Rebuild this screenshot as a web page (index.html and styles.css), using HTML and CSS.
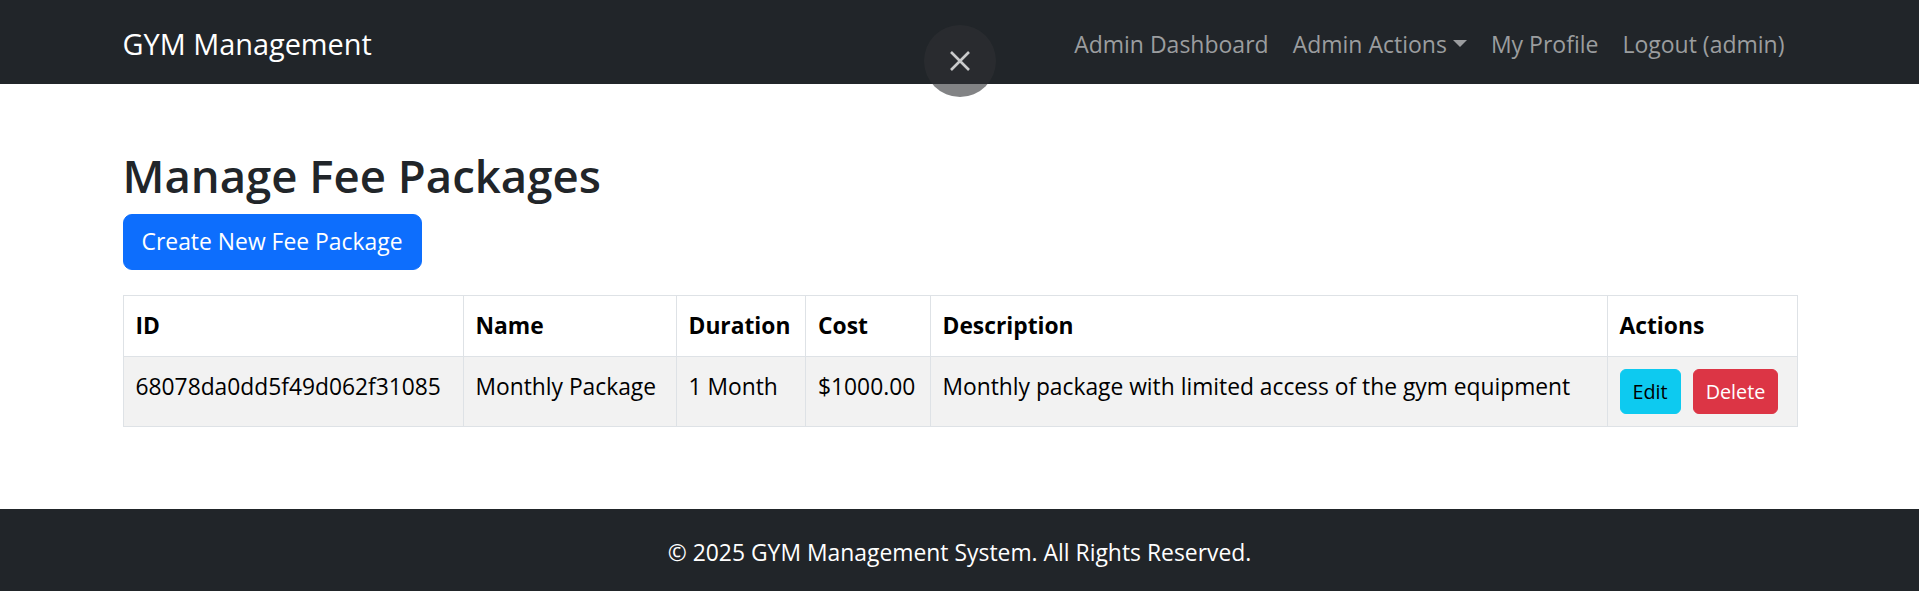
FILE: index.html
```html
<!DOCTYPE html>
<html lang="en">
<head>
<meta charset="utf-8">
<title>Manage Fee Packages</title>
<link rel="stylesheet" href="styles.css">
</head>
<body>
<nav class="navbar">
  <div class="container nav-inner">
    <a class="brand" href="#">GYM Management</a>
    <ul class="nav-links">
      <li><a class="nav-link" href="#">Admin Dashboard</a></li>
      <li><a class="nav-link dropdown-toggle" href="#">Admin Actions</a></li>
      <li><a class="nav-link" href="#">My Profile</a></li>
      <li><a class="nav-link" href="#">Logout (admin)</a></li>
    </ul>
  </div>
</nav>
<button class="close-overlay" type="button" aria-label="Close">
  <svg class="close-icon" viewBox="0 0 22 22" width="22" height="22" aria-hidden="true">
    <path d="M2 2 L20 20 M20 2 L2 20" stroke="currentColor" stroke-width="2.6" stroke-linecap="butt" fill="none"/>
  </svg>
</button>
<main class="container main">
  <h2 class="page-title">Manage Fee Packages</h2>
  <div class="toolbar">
    <a class="btn btn-primary" href="#">Create New Fee Package</a>
  </div>
  <table class="table">
    <colgroup>
      <col class="col-id">
      <col class="col-name">
      <col class="col-duration">
      <col class="col-cost">
      <col class="col-desc">
      <col class="col-actions">
    </colgroup>
    <thead>
      <tr>
        <th>ID</th>
        <th>Name</th>
        <th>Duration</th>
        <th>Cost</th>
        <th>Description</th>
        <th>Actions</th>
      </tr>
    </thead>
    <tbody>
      <tr>
        <td>68078da0dd5f49d062f31085</td>
        <td>Monthly Package</td>
        <td>1 Month</td>
        <td>$1000.00</td>
        <td>Monthly package with limited access of the gym equipment</td>
        <td>
          <div class="row-actions">
            <a class="btn btn-sm btn-info" href="#">Edit</a>
            <button class="btn btn-sm btn-danger" type="button">Delete</button>
          </div>
        </td>
      </tr>
    </tbody>
  </table>
</main>
<footer class="footer">
  <p class="footer-text">© 2025 GYM Management System. All Rights Reserved.</p>
</footer>
</body>
</html>
```

FILE: styles.css
```css
* {
  box-sizing: border-box;
}

html, body {
  margin: 0;
  padding: 0;
}

body {
  font-family: "Open Sans", "Noto Sans", "Liberation Sans", sans-serif;
  font-size: 22.8px;
  line-height: 36px;
  color: #212529;
  background: #ffffff;
  min-height: 100vh;
  display: flex;
  flex-direction: column;
}

a {
  text-decoration: none;
}

.container {
  width: 100%;
  max-width: 1710px;
  margin: 0 auto;
  padding: 0 18px;
}

/* Navbar */
.navbar {
  background: #212529;
  padding: 12px 0;
}

.nav-inner {
  display: flex;
  align-items: center;
  justify-content: space-between;
}

.brand {
  color: #ffffff;
  font-size: 28.9px;
  line-height: 45px;
  padding: 8.5px 0 6.5px;
}

.nav-links {
  list-style: none;
  margin: 0;
  padding: 0;
  display: flex;
  align-items: center;
}

.nav-link {
  display: block;
  color: #9b9d9f;
  font-size: 23px;
  padding: 14px 12px 10px;
  line-height: 36px;
}

.dropdown-toggle::after {
  content: "";
  display: inline-block;
  margin-left: 6px;
  vertical-align: 6px;
  border-top: 7px solid;
  border-right: 7px solid transparent;
  border-left: 7px solid transparent;
  border-bottom: 0;
}

/* Floating close control */
.close-overlay {
  position: absolute;
  left: 924px;
  top: 25px;
  width: 72px;
  height: 72px;
  border-radius: 50%;
  border: 0;
  padding: 0;
  background: rgba(46, 48, 52, 0.6);
  color: #c9cacb;
  display: flex;
  align-items: center;
  justify-content: center;
}

.close-icon {
  display: block;
  width: 22px;
  height: 22px;
}

/* Main */
.main {
  padding-top: 64px;
  padding-bottom: 24px;
}

.page-title {
  margin: 0 0 12px;
  font-size: 45.5px;
  font-weight: 600;
  line-height: 54px;
  color: #212529;
}

.toolbar {
  display: flex;
  margin-bottom: 25px;
}

.btn {
  display: inline-block;
  font-family: inherit;
  font-size: 22.9px;
  line-height: 36px;
  padding: 8.75px 18px;
  border: 1px solid transparent;
  border-radius: 9px;
  cursor: pointer;
  white-space: nowrap;
}

.btn-primary {
  background: #0d6efd;
  border-color: #0d6efd;
  color: #ffffff;
}

.btn-sm {
  font-size: 19.8px;
  line-height: 31.5px;
  padding: 6px 12px;
  border-radius: 6px;
}

.btn-info {
  background: #0dcaf0;
  border-color: #0dcaf0;
  color: #000000;
}

.btn-danger {
  background: #dc3545;
  border-color: #dc3545;
  color: #ffffff;
}

/* Table */
.table {
  width: 100%;
  table-layout: fixed;
  border-collapse: collapse;
  margin-bottom: 24px;
  color: #000000;
}

.col-id { width: 340px; }
.col-name { width: 213px; }
.col-duration { width: 129.5px; }
.col-cost { width: 124.5px; }
.col-desc { width: 677px; }
.col-actions { width: 190px; }

.table th,
.table td {
  border: 1px solid #dee2e6;
  padding: 12px;
  vertical-align: top;
  text-align: left;
  white-space: nowrap;
  line-height: 36px;
}

.table th {
  font-weight: 700;
  background: #ffffff;
}

.table tbody td {
  background: #f2f2f2;
}

.row-actions {
  display: flex;
  gap: 12px;
}

/* Footer */
.footer {
  margin-top: auto;
  background: #212529;
  color: #ffffff;
  padding: 26px 0 20px;
  text-align: center;
}

.footer-text {
  margin: 0;
  line-height: 36px;
  font-size: 22.9px;
}
```
